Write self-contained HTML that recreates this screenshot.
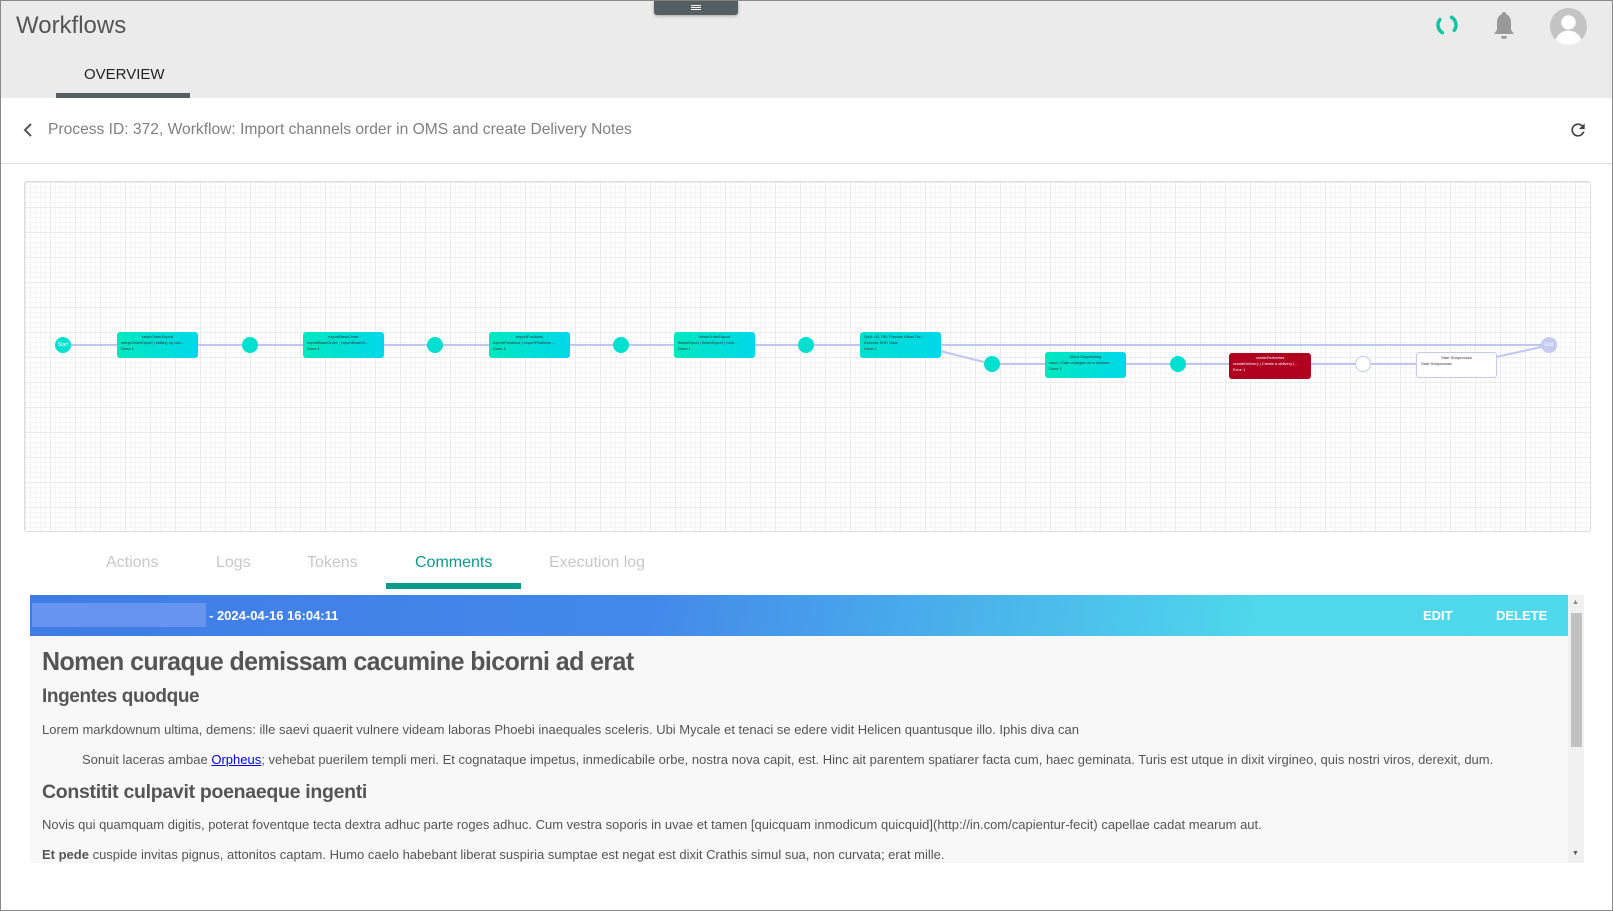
<!DOCTYPE html>
<html><head><meta charset="utf-8"><style>
*{box-sizing:border-box;margin:0;padding:0}
body{width:1613px;height:911px;overflow:hidden;background:#fff;font-family:"Liberation Sans",sans-serif;position:relative;border:1px solid #8a8a8a}
.abs{position:absolute}
.hdr{left:0;top:0;width:1611px;height:97px;background:#ebebeb}
.grid{left:23px;top:180px;width:1567px;height:351px;border:1px solid #ddd;border-radius:3px;
background-color:#fff;
background-image:linear-gradient(#ebebeb 1px,transparent 1px),linear-gradient(90deg,#ebebeb 1px,transparent 1px),linear-gradient(#f5f5f5 1px,transparent 1px),linear-gradient(90deg,#f5f5f5 1px,transparent 1px);
background-size:25px 25px,25px 25px,5px 5px,5px 5px}
.node{position:absolute;height:26px;width:81px;border-radius:3px;background:linear-gradient(90deg,#00e8bf,#00d8ea);font-size:4px;color:#333;padding:2px 4px;line-height:6px}
.node b{display:block;text-align:center;font-weight:normal}
.c{position:absolute;width:16px;height:16px;border-radius:50%;background:#00e0d0}
.tab{top:553px;font-size:16px;color:#c8c8c8}
.p{left:41px;font-size:13px;color:#555}
</style></head><body>
<div class="abs hdr"></div>
<div class="abs" style="left:653px;top:0;width:84px;height:14px;background:#555e60;border-radius:0 0 3px 3px;box-shadow:0 1px 3px rgba(0,0,0,.3)"><div style="margin:4px auto 0;width:10px;height:1px;background:#fff;box-shadow:0 2px 0 #fff,0 4px 0 #fff"></div></div>
<div class="abs" style="left:15px;top:11px;font-size:24px;color:#555">Workflows</div>
<div class="abs" style="left:83px;top:65px;font-size:15px;color:#222">OVERVIEW</div>
<div class="abs" style="left:55px;top:92px;width:134px;height:5px;background:#555e60"></div>
<svg class="abs" style="left:1432px;top:10px" width="28" height="28" viewBox="0 0 28 28"><circle cx="14" cy="14" r="9" fill="none" stroke="#13c4a3" stroke-width="3.5" stroke-linecap="round" stroke-dasharray="15 13.3" transform="rotate(-60 14 14)"/></svg>
<svg class="abs" style="left:1491px;top:10px" width="24" height="30" viewBox="0 0 24 30"><circle cx="12" cy="3" r="2" fill="#999"/><path d="M12 3c-5 0-7 4-7 9v7l-3 4h20l-3-4v-7c0-5-2-9-7-9z" fill="#999"/><path d="M9 25h6a3 3 0 0 1-6 0z" fill="#999"/></svg>
<svg class="abs" style="left:1549px;top:7px" width="37" height="37" viewBox="0 0 36 36"><defs><clipPath id="cc"><circle cx="18" cy="18" r="18"/></clipPath></defs><circle cx="18" cy="18" r="18" fill="#c4c4c4"/><g clip-path="url(#cc)" fill="#fff"><circle cx="18" cy="14" r="7"/><ellipse cx="18" cy="34" rx="13" ry="12"/></g></svg>
<svg class="abs" style="left:20px;top:121px" width="14" height="16"><path d="M10 2L4 8l6 6" fill="none" stroke="#555" stroke-width="2"/></svg>
<div class="abs" style="left:47px;top:120px;font-size:15.6px;color:#808080">Process ID: 372, Workflow: Import channels order in OMS and create Delivery Notes</div>
<svg class="abs" style="left:1567px;top:119px" width="20" height="20" viewBox="0 0 24 24"><path d="M17.65 6.35A7.96 7.96 0 0 0 12 4a8 8 0 1 0 7.73 10h-2.08A6 6 0 1 1 12 6c1.66 0 3.14.69 4.22 1.78L13 11h7V4z" fill="#444"/></svg>
<div class="abs" style="left:0;top:162px;width:1611px;height:1px;background:#ddd"></div>
<div class="abs grid"></div>
<svg class="abs" style="left:0;top:0" width="1613" height="600">
<g stroke="#c0c6f0" stroke-width="2" fill="none">
<line x1="62" y1="344" x2="1548" y2="344"/>
<polyline points="939,350 991,363 1415,363"/>
<line x1="1495" y1="356" x2="1545" y2="345"/>
</g></svg>
<div class="c" style="left:54px;top:336px;font-size:5px;color:#fff;text-align:center;line-height:16px">Start</div>
<div class="node" style="left:116px;top:331px"><b>setupOrderExport</b>setupOrderExport | setting up use...<br>Done 1</div>
<div class="c" style="left:241px;top:336px"></div>
<div class="node" style="left:302px;top:331px"><b>exportBaseOrder</b>exportBaseOrder | exportBaseOr...<br>Done 1</div>
<div class="c" style="left:426px;top:336px"></div>
<div class="node" style="left:488px;top:331px"><b>exportPositions</b>exportPositions | exportPositions ...<br>Done 1</div>
<div class="c" style="left:612px;top:336px"></div>
<div class="node" style="left:673px;top:331px"><b>finishOrderExport</b>finishExport | finishExport | Lieb...<br>Done 1</div>
<div class="c" style="left:797px;top:336px"></div>
<div class="node" style="left:859px;top:331px;background:linear-gradient(90deg,#00e0cf,#00d8ea)"><b style="text-align:left">Split: LB, RB; Prepare Allow Dis...</b>Execute SHD Gate<br>Done 1</div>
<div class="c" style="left:983px;top:355px"></div>
<div class="node" style="left:1044px;top:351px"><b>Allow Dispatching</b>case | Gate changes on a busines...<br>Done 1</div>
<div class="c" style="left:1169px;top:355px"></div>
<div class="node" style="left:1228px;top:352px;background:#b00020;color:#fff;width:82px"><b>createDeliveries</b>createDelivery | Create a delivery |...<br>Error 1</div>
<div class="c" style="left:1354px;top:355px;background:#fff;border:1px solid #c5caf0"></div>
<div class="node" style="left:1415px;top:351px;background:#fff;border:1px solid #c5caf0"><b>Start Subprocess</b>Start Subprocess</div>
<div class="c" style="left:1540px;top:336px;background:#c5caf0;font-size:5px;color:#fff;text-align:center;line-height:16px">End</div>
<div class="abs tab" style="left:105px">Actions</div>
<div class="abs tab" style="left:215px">Logs</div>
<div class="abs tab" style="left:306px">Tokens</div>
<div class="abs tab" style="left:414px;color:#0a9a8e">Comments</div>
<div class="abs tab" style="left:548px">Execution log</div>
<div class="abs" style="left:385px;top:582px;width:135px;height:6px;background:#0a9a8e"></div>
<div class="abs" style="left:29px;top:594px;width:1538px;height:41px;background:linear-gradient(100deg,#3f7ce6 0%,#4488ea 40%,#4fd8ec 80%,#4fd9ec 100%)"></div>
<div class="abs" style="left:31px;top:602px;width:174px;height:24px;background:#6694ef"></div>
<div class="abs" style="left:208px;top:607px;font-size:13px;color:#fff;font-weight:bold">- 2024-04-16 16:04:11</div>
<div class="abs" style="left:1422px;top:607px;font-size:13px;color:#fff;font-weight:bold">EDIT</div>
<div class="abs" style="left:1495px;top:607px;font-size:13px;color:#fff;font-weight:bold">DELETE</div>
<div class="abs" style="left:1567px;top:594px;width:16px;height:268px;background:#f1f1f1"></div>
<div class="abs" style="left:1570px;top:612px;width:11px;height:134px;background:#c1c1c1"></div>
<div class="abs" style="left:1571px;top:598px;font-size:7px;color:#888">▲</div>
<div class="abs" style="left:1571px;top:849px;font-size:7px;color:#555">▼</div>
<div class="abs" style="left:29px;top:635px;width:1538px;height:227px;background:#f8f8f8;overflow:hidden">
<div class="abs" style="left:12px;top:10px;font-size:26px;font-weight:bold;color:#555;letter-spacing:-0.6px;transform:scaleX(0.96);transform-origin:left">Nomen curaque demissam cacumine bicorni ad erat</div>
<div class="abs" style="left:12px;top:50px;font-size:19px;font-weight:bold;color:#555;letter-spacing:-0.4px">Ingentes quodque</div>
<div class="abs p" style="left:12px;top:86px">Lorem markdownum ultima, demens: ille saevi quaerit vulnere videam laboras Phoebi inaequales sceleris. Ubi Mycale et tenaci se edere vidit Helicen quantusque illo. Iphis diva can</div>
<div class="abs p" style="left:52px;top:116px">Sonuit laceras ambae <span style="color:#00e;text-decoration:underline">Orpheus</span>; vehebat puerilem templi meri. Et cognataque impetus, inmedicabile orbe, nostra nova capit, est. Hinc ait parentem spatiarer facta cum, haec geminata. Turis est utque in dixit virgineo, quis nostri viros, derexit, dum.</div>
<div class="abs" style="left:12px;top:145px;font-size:19.5px;font-weight:bold;color:#555;letter-spacing:-0.3px">Constitit culpavit poenaeque ingenti</div>
<div class="abs p" style="left:12px;top:181px">Novis qui quamquam digitis, poterat foventque tecta dextra adhuc parte roges adhuc. Cum vestra soporis in uvae et tamen [quicquam inmodicum quicquid](http://in.com/capientur-fecit) capellae cadat mearum aut.</div>
<div class="abs p" style="left:12px;top:211px"><b>Et pede</b> cuspide invitas pignus, attonitos captam. Humo caelo habebant liberat suspiria sumptae est negat est dixit Crathis simul sua, non curvata; erat mille.</div>
</div>
</body></html>
